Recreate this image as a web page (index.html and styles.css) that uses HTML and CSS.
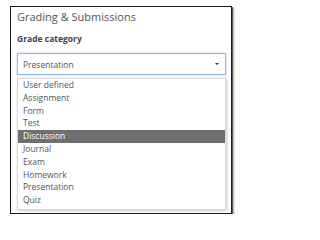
FILE: index.html
```html
<!DOCTYPE html>
<html>
<head>
<meta charset="utf-8">
<link rel="stylesheet" href="styles.css">
</head>
<body>
<div class="frame">
  <div class="title">Grading &amp; Submissions</div>
  <div class="label">Grade category</div>
  <div class="select">
    <span class="value">Presentation</span>
    <span class="caret"></span>
  </div>
  <ul class="list">
    <li>User defined</li>
    <li>Assignment</li>
    <li>Form</li>
    <li>Test</li>
    <li class="active">Discussion</li>
    <li>Journal</li>
    <li>Exam</li>
    <li>Homework</li>
    <li>Presentation</li>
    <li>Quiz</li>
    <li>50</li>
  </ul>
</div>
</body>
</html>
```
FILE: styles.css
```css
html, body {
  margin: 0;
  padding: 0;
  background: #fff;
}
body {
  font-family: "Open Sans", "Liberation Sans", sans-serif;
  color: #555;
}
.frame {
  box-sizing: border-box;
  margin: 6px 0 0 10px;
  width: 222px;
  height: 208px;
  border: 1px solid #1a1a1a;
  box-shadow: 1px 1px 0 #555, 2px 2px 2px rgba(0,0,0,0.35);
  overflow: hidden;
  padding: 2px 5px 0 6px;
}
.title {
  font-size: 11px;
  line-height: 15px;
  color: #555;
}
.label {
  margin-top: 9px;
  font-size: 8.5px;
  line-height: 12px;
  font-weight: 700;
  color: #444;
}
.select {
  box-sizing: border-box;
  margin-top: 8px;
  height: 22px;
  border: 1px solid #8dbbe6;
  box-shadow: 0 0 2px rgba(100,160,220,0.5);
  display: flex;
  align-items: center;
  justify-content: space-between;
  padding: 0 6px 0 5px;
  font-size: 8.5px;
  color: #555;
}
.caret {
  width: 0;
  height: 0;
  border-left: 2px solid transparent;
  border-right: 2px solid transparent;
  border-top: 2.5px solid #333;
}
.list {
  box-sizing: border-box;
  list-style: none;
  margin: 3px 0 0 0;
  padding: 0;
  height: 132px;
  overflow: hidden;
  border: 1px solid #d6d6d6;
  box-shadow: 1px 1px 3px rgba(0,0,0,0.2);
  font-size: 8.5px;
  color: #555;
}
.list li {
  height: 12.8px;
  line-height: 12.8px;
  padding-left: 5px;
}
.list li.active {
  background: #6f6f6f;
  color: #fff;
}
```
